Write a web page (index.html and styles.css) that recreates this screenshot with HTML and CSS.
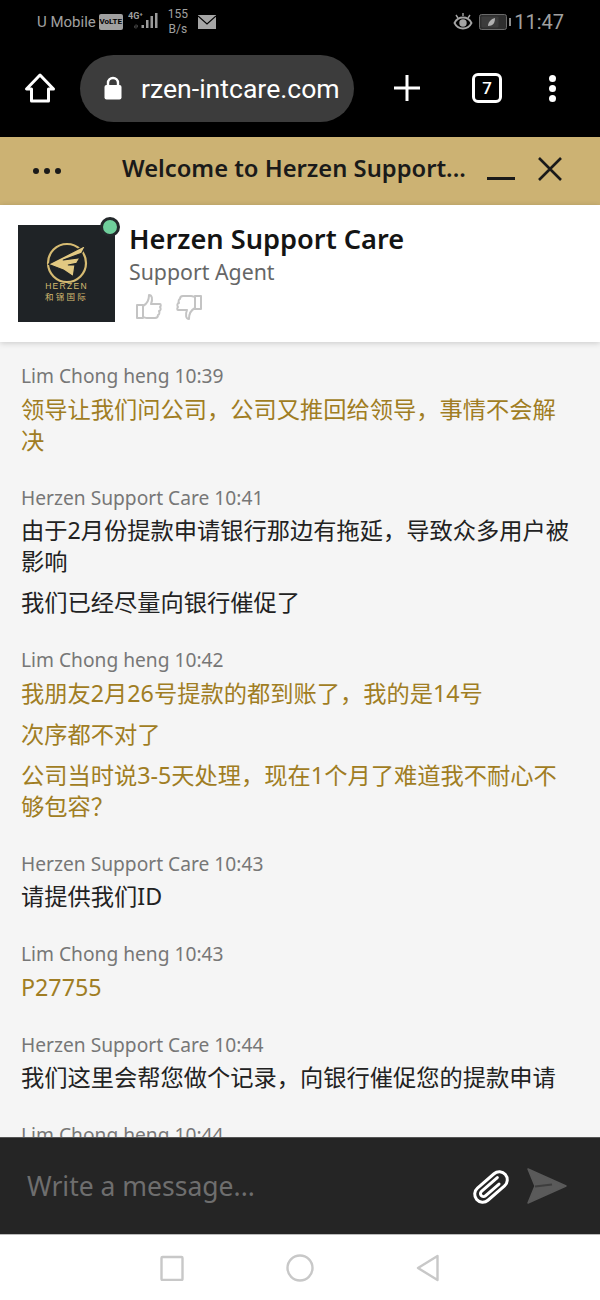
FILE: index.html
```html
<!DOCTYPE html>
<html lang="zh">

<head>
    <meta charset="utf-8">
    <title>Herzen Support Care</title>
    <link rel="stylesheet" href="styles.css">
</head>

<body>
    <div class="phone">
        <!-- android status bar -->
        <div class="statusbar">
            <div class="status-left">
                <span class="carrier">U Mobile</span>
                <span class="volte">VoLTE</span>
                <svg class="signal" width="32" height="22" viewBox="0 0 32 22">
                    <text x="0" y="8" class="net">4G⁺</text>
                    <rect x="13.500" y="14" width="2.500" height="3" fill="#9a9a9a"></rect>
                    <rect x="18" y="9" width="2.500" height="8" fill="#9a9a9a"></rect>
                    <rect x="22.500" y="5" width="2.500" height="12" fill="#9a9a9a"></rect>
                    <rect x="27" y="2" width="2.500" height="15" fill="#9a9a9a"></rect>
                    <path d="M6 16l1.500-3v5zM10 15l-1.500 3v-5z" fill="#555"></path>
                </svg>
                <span class="speed">155<br>B/s</span>
                <svg class="mail" width="18" height="14" viewBox="0 0 18 14">
                    <rect width="18" height="14" fill="#a5a5a5"></rect>
                    <path d="M0 1l9 8 9-8" fill="none" stroke="#000" stroke-width="1.200"></path>
                </svg>
            </div>
            <div class="status-right">
                <svg width="20" height="18" viewBox="0 0 20 18" fill="none" stroke="#a5a5a5" stroke-width="1.800">
                    <path d="M1.500 10c2-4 5-5.500 8.500-5.500s6.500 1.500 8.500 5.500c-2 4-5 5.500-8.500 5.500s-6.500-1.500-8.500-5.500z"></path>
                    <circle cx="10" cy="10" r="2.800" fill="#a5a5a5"></circle>
                    <path d="M3 2l2 3M17 2l-2 3M10 0v3" stroke-width="1.400"></path>
                </svg>
                <svg class="battery" width="32" height="16" viewBox="0 0 32 16">
                    <rect x="0.500" y="0.500" width="27" height="15" rx="2" fill="#2e2e2e" stroke="#6a6a6a"></rect>
                    <rect x="2.500" y="2.500" width="17" height="11" rx="1" fill="#3c3c3c"></rect>
                    <path d="M9 12c0-4 3-7 7-8 0 5-2 8-7 8z" fill="#b0b0b0"></path>
                    <rect x="30" y="4" width="2" height="8" fill="#8c8c8c"></rect>
                </svg>
                <span class="clock">11:47</span>
            </div>
        </div>

        <!-- browser toolbar -->
        <div class="toolbar">
            <svg class="home-icon" width="32" height="32" viewBox="0 0 32 32" fill="none" stroke="#fff" stroke-width="3" stroke-linejoin="round">
                <path d="M16 3L2.500 17H7.500V29H24.500V17H29.500Z"></path>
            </svg>
            <div class="urlbar">
                <svg width="20" height="24" viewBox="0 0 20 24">
                    <path d="M5 10V7a5 5 0 0 1 10 0v3" fill="none" stroke="#fff" stroke-width="2.400"></path>
                    <rect x="1.500" y="9" width="17" height="14.500" rx="2" fill="#fff"></rect>
                </svg>
                <span class="url">rzen-intcare.com</span>
            </div>
            <svg class="plus-icon" width="26" height="26" viewBox="0 0 26 26" stroke="#fff" stroke-width="3">
                <path d="M13 0V26M0 13H26"></path>
            </svg>
            <div class="tabs">7</div>
            <div class="dots">
                <i></i>
                <i></i>
                <i></i>
            </div>
        </div>

        <!-- gold title bar -->
        <div class="titlebar">
            <div class="more"><i></i><i></i><i></i></div>
            <div class="title">Welcome to Herzen Support...</div>
            <svg class="minimize" width="28" height="28" viewBox="0 0 28 28">
                <rect y="22" width="28" height="3" fill="#1a1a1a"></rect>
            </svg>
            <svg class="close" width="26" height="26" viewBox="0 0 26 26" stroke="#1a1a1a" stroke-width="2.600">
                <path d="M2 2L24 24M24 2L2 24"></path>
            </svg>
        </div>

        <!-- agent -->
        <div class="agent">
            <div class="avatar">
                <svg width="46" height="46" viewBox="0 0 46 46" fill="none">
                    <circle cx="23" cy="23" r="19" stroke="#d6bb72" stroke-width="2.200"></circle>
                    <path d="M4.300 24.300L42 5L37.700 13.300L19.300 20L36 17.700L32.700 23.300L24.300 25H31L29.300 36.700L19.300 30Z" fill="#e2c982" stroke="#1f2326" stroke-width="1.200" stroke-linejoin="round"></path>
                </svg>
                <div class="brand">HERZEN</div>
                <div class="brand-cn">和锦国际</div>
                <span class="online"></span>
            </div>
            <div class="agent-info">
                <div class="agent-name">Herzen Support Care</div>
                <div class="agent-role">Support Agent</div>
                <div class="rating">
                    <svg width="26" height="26" viewBox="0 0 26 26" fill="none" stroke="#c4c4c4" stroke-width="2" stroke-linejoin="round">
                        <path d="M1 11H7V24H1ZM7 12C11 10 13 6 13 1C16 1 17 5 15 10H24C25 10 25 12 24 13C25 14 25 17 23 17C24 19 23 21 22 21C22 23 21 24 19 24H11C9 24 8 23 7 23"></path>
                    </svg>
                    <svg width="26" height="26" viewBox="0 0 26 26" fill="none" stroke="#c4c4c4" stroke-width="2" stroke-linejoin="round">
                        <path d="M25 15H19V2H25ZM19 14C15 16 13 20 13 25C10 25 9 21 11 16H2C1 16 1 14 2 13C1 12 1 9 3 9C2 7 3 5 4 5C4 3 5 2 7 2H15C17 2 18 3 19 3"></path>
                    </svg>
                </div>
            </div>
        </div>

        <!-- messages -->
        <div class="chat">
            <div class="msg visitor">
                <div class="who">Lim Chong heng 10:39</div>
                <p>领导让我们问公司，公司又推回给领导，事情不会解决</p>
            </div>
            <div class="msg">
                <div class="who">Herzen Support Care 10:41</div>
                <p>由于2月份提款申请银行那边有拖延，导致众多用户被影响</p>
                <p>我们已经尽量向银行催促了</p>
            </div>
            <div class="msg visitor">
                <div class="who">Lim Chong heng 10:42</div>
                <p>我朋友2月26号提款的都到账了，我的是14号</p>
                <p>次序都不对了</p>
                <p>公司当时说3-5天处理，现在1个月了难道我不耐心不够包容？</p>
            </div>
            <div class="msg">
                <div class="who">Herzen Support Care 10:43</div>
                <p>请提供我们ID</p>
            </div>
            <div class="msg visitor">
                <div class="who">Lim Chong heng 10:43</div>
                <p>P27755</p>
            </div>
            <div class="msg">
                <div class="who">Herzen Support Care 10:44</div>
                <p>我们这里会帮您做个记录，向银行催促您的提款申请</p>
            </div>
            <div class="msg visitor">
                <div class="who">Lim Chong heng 10:44</div>
            </div>
        </div>

        <!-- composer -->
        <div class="composer">
            <div class="placeholder">Write a message...</div>
            <svg class="clip" width="40" height="38" viewBox="0 0 40 38" fill="none" stroke="#fff" stroke-width="3" stroke-linecap="round">
                <g transform="translate(20 20) rotate(-41) translate(-19 -8)">
                    <rect x="0" y="0" width="38" height="16" rx="8"></rect>
                    <path d="M30 5H9a3 3 0 0 0 0 6H27"></path>
                </g>
            </svg>
            <svg class="send" width="42" height="38" viewBox="0 0 42 38">
                <path d="M2 2L40 19L2 36L9 19Z" fill="#5a5a5a" stroke="#5a5a5a" stroke-width="1.500" stroke-linejoin="round"></path>
                <path d="M9 19.500L26 17.500" stroke="#3e3e3e" stroke-width="2"></path>
            </svg>
        </div>

        <!-- android nav -->
        <div class="navbar">
            <svg width="24" height="26" viewBox="0 0 24 26" fill="none" stroke="#c8c8c8" stroke-width="2.400">
                <rect x="1.500" y="2" width="21" height="23" rx="1"></rect>
            </svg>
            <svg width="28" height="28" viewBox="0 0 28 28" fill="none" stroke="#c8c8c8" stroke-width="2.400">
                <circle cx="14" cy="14" r="12.500"></circle>
            </svg>
            <svg width="24" height="28" viewBox="0 0 24 28" fill="none" stroke="#c8c8c8" stroke-width="2.400" stroke-linejoin="round">
                <path d="M21.500 2V26L2 14Z"></path>
            </svg>
        </div>
    </div>
</body>

</html>
```

FILE: styles.css
```css
* {
    box-sizing: border-box;
}

body {
    margin: 0;
    font-family: "Noto Sans", "Noto Sans CJK SC", sans-serif;
    background-color: #f5f5f5;
}

.phone {
    width: 600px;
    height: 1300px;
    display: flex;
    flex-direction: column;
    overflow: hidden;
}

/* status bar */
.statusbar {
    height: 44px;
    flex: none;
    background-color: #000;
    color: #a0a0a0;
    display: flex;
    justify-content: space-between;
    align-items: center;
    padding: 0 36px 0 37px;
    font-family: Roboto, sans-serif;
}

.status-left,
.status-right {
    display: flex;
    align-items: center;
}

.carrier {
    font-size: 15px;
}

.volte {
    background-color: #a0a0a0;
    color: #000;
    font-size: 8px;
    font-weight: 700;
    width: 24px;
    height: 16px;
    line-height: 16px;
    text-align: center;
    border-radius: 2px;
    margin-left: 3px;
    overflow: hidden;
}

.signal {
    margin-left: 5px;
}

.net {
    font-size: 9px;
    font-weight: 700;
    fill: #a0a0a0;
}

.speed {
    font-size: 12px;
    line-height: 15px;
    text-align: center;
    margin-left: 8px;
}

.mail {
    margin-left: 10px;
}

.status-right .battery {
    margin-left: 6px;
}

.clock {
    font-size: 20px;
    margin-left: 3px;
}

/* toolbar */
.toolbar {
    height: 93px;
    flex: none;
    background-color: #000;
    display: flex;
    align-items: center;
    padding-bottom: 5px;
}

.home-icon {
    margin-left: 24px;
}

.urlbar {
    width: 274px;
    height: 67px;
    margin-left: 24px;
    background-color: #3c3c3c;
    border-radius: 34px;
    display: flex;
    align-items: center;
    padding-left: 23px;
    overflow: hidden;
}

.url {
    color: #fff;
    font-family: Roboto, sans-serif;
    font-size: 26.600px;
    margin-left: 18px;
    white-space: nowrap;
}

.plus-icon {
    margin-left: 40px;
}

.tabs {
    width: 30px;
    height: 30px;
    margin-left: 52px;
    border: 3px solid #fff;
    border-radius: 6px;
    color: #fff;
    font-family: Roboto, sans-serif;
    font-size: 17px;
    font-weight: 500;
    line-height: 24px;
    text-align: center;
}

.dots {
    margin-left: 47px;
    display: flex;
    flex-direction: column;
    gap: 3px;
}

.dots i {
    width: 7px;
    height: 7px;
    border-radius: 50%;
    background-color: #fff;
}

/* title bar */
.titlebar {
    height: 68px;
    flex: none;
    background-color: #ccb273;
    display: flex;
    align-items: center;
    color: #1a1a1a;
}

.more {
    display: flex;
    gap: 5px;
    margin-left: 33px;
}

.more i {
    width: 6px;
    height: 6px;
    border-radius: 50%;
    background-color: #1a1a1a;
}

.title {
    font-size: 23.750px;
    font-weight: 600;
    margin-left: 61px;
    padding-bottom: 6px;
    width: 352px;
    white-space: nowrap;
}

.minimize {
    margin-left: 13px;
    margin-bottom: 4px;
}

.close {
    margin-left: 22px;
    margin-bottom: 4px;
}

/* agent */
.agent {
    height: 137px;
    flex: none;
    background-color: #fff;
    display: flex;
    padding: 20px 0 0 18px;
    box-shadow: 0 1px 6px rgba(0, 0, 0, 0.18);
    position: relative;
}

.avatar {
    width: 97px;
    height: 97px;
    background-color: #1f2326;
    position: relative;
    display: flex;
    flex-direction: column;
    align-items: center;
    padding-top: 15px;
    color: #d6bb72;
}

.brand {
    font-family: "Liberation Sans", sans-serif;
    font-size: 8.500px;
    line-height: 10px;
    letter-spacing: 1.300px;
    margin-top: -5px;
}

.brand-cn {
    font-size: 8.500px;
    line-height: 11.500px;
    letter-spacing: 2.200px;
}

.online {
    position: absolute;
    top: -8px;
    right: -5px;
    width: 20px;
    height: 20px;
    border-radius: 50%;
    background-color: #6fcf9c;
    border: 3px solid #23282b;
}

.agent-info {
    margin: -1px 0 0 14px;
}

.agent-name {
    font-size: 27.200px;
    font-weight: 600;
    line-height: 30px;
    color: #141414;
}

.agent-role {
    font-size: 21.300px;
    line-height: 28px;
    margin-top: 4px;
    color: #666;
}

.rating {
    display: flex;
    gap: 14px;
    margin: 8px 0 0 7px;
}

/* chat */
.chat {
    flex: 1;
    min-height: 0;
    overflow: hidden;
    background-color: #f5f5f5;
    padding: 20px 22px 0 21px;
}

.msg {
    margin-bottom: 28px;
}

.who {
    font-size: 19.200px;
    line-height: 28px;
    color: #777;
    margin-bottom: 3.500px;
}

.msg p {
    margin: 0 0 10px;
    font-size: 23.250px;
    line-height: 31px;
    color: #222;
}

.msg p:last-child {
    margin-bottom: 0;
}

.visitor p {
    color: #a07d23;
}

/* composer */
.composer {
    height: 98px;
    flex: none;
    background-color: #252525;
    border-top: 1px solid #555;
    border-bottom: 1px solid #bbb;
    display: flex;
    align-items: center;
    padding-left: 27px;
    position: relative;
}

.placeholder {
    font-size: 26.500px;
    color: #6e6e6e;
    width: 444px;
}

.send {
    margin-left: 15px;
}

/* nav */
.navbar {
    height: 65px;
    flex: none;
    background-color: #fff;
    display: flex;
    align-items: center;
    padding: 0 0 0 160px;
    gap: 102px;
}
```
